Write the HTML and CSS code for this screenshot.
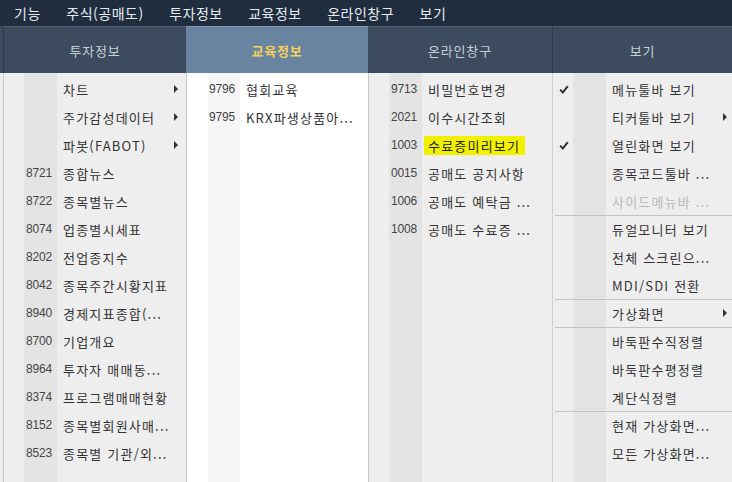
FILE: index.html
```html
<!DOCTYPE html>
<html lang="ko">
<head>
<meta charset="utf-8">
<title>메뉴</title>
<link rel="stylesheet" href="styles.css">
</head>
<body>
<nav class="menubar">
  <span class="mb-item">기능</span>
  <span class="mb-item">주식(공매도)</span>
  <span class="mb-item">투자정보</span>
  <span class="mb-item">교육정보</span>
  <span class="mb-item">온라인창구</span>
  <span class="mb-item">보기</span>
</nav>
<div class="panel">
  <section class="col col-1">
    <div class="head">투자정보</div>
    <ul class="list">
      <li class="item"><span class="chk"></span><span class="code"></span><span class="label">차트</span><span class="sub"></span></li>
      <li class="item"><span class="chk"></span><span class="code"></span><span class="label">주가감성데이터</span><span class="sub"></span></li>
      <li class="item"><span class="chk"></span><span class="code"></span><span class="label">파봇(FABOT)</span><span class="sub"></span></li>
      <li class="item"><span class="chk"></span><span class="code">8721</span><span class="label">종합뉴스</span></li>
      <li class="item"><span class="chk"></span><span class="code">8722</span><span class="label">종목별뉴스</span></li>
      <li class="item"><span class="chk"></span><span class="code">8074</span><span class="label">업종별시세표</span></li>
      <li class="item"><span class="chk"></span><span class="code">8202</span><span class="label">전업종지수</span></li>
      <li class="item"><span class="chk"></span><span class="code">8042</span><span class="label">종목주간시황지표</span></li>
      <li class="item"><span class="chk"></span><span class="code">8940</span><span class="label">경제지표종합(...</span></li>
      <li class="item"><span class="chk"></span><span class="code">8700</span><span class="label">기업개요</span></li>
      <li class="item"><span class="chk"></span><span class="code">8964</span><span class="label">투자자 매매동...</span></li>
      <li class="item"><span class="chk"></span><span class="code">8374</span><span class="label">프로그램매매현황</span></li>
      <li class="item"><span class="chk"></span><span class="code">8152</span><span class="label">종목별회원사매...</span></li>
      <li class="item"><span class="chk"></span><span class="code">8523</span><span class="label">종목별 기관/외...</span></li>
    </ul>
  </section>
  <section class="col col-2">
    <div class="head head-active">교육정보</div>
    <ul class="list list-white">
      <li class="item"><span class="chk"></span><span class="code">9796</span><span class="label">협회교육</span></li>
      <li class="item"><span class="chk"></span><span class="code">9795</span><span class="label">KRX파생상품아...</span></li>
    </ul>
  </section>
  <section class="col col-3">
    <div class="head">온라인창구</div>
    <ul class="list">
      <li class="item"><span class="chk"></span><span class="code">9713</span><span class="label">비밀번호변경</span></li>
      <li class="item"><span class="chk"></span><span class="code">2021</span><span class="label">이수시간조회</span></li>
      <li class="item"><span class="chk"></span><span class="code">1003</span><span class="label"><mark class="hl">수료증미리보기</mark></span></li>
      <li class="item"><span class="chk"></span><span class="code">0015</span><span class="label">공매도 공지사항</span></li>
      <li class="item"><span class="chk"></span><span class="code">1006</span><span class="label">공매도 예탁금 ...</span></li>
      <li class="item"><span class="chk"></span><span class="code">1008</span><span class="label">공매도 수료증 ...</span></li>
    </ul>
  </section>
  <section class="col col-4">
    <div class="head head-split">보기</div>
    <ul class="list">
      <li class="item"><span class="chk"><svg class="tick" width="10" height="9" viewBox="0 0 10 9"><path d="M1.2 4.6 L3.8 7.4 L8.8 1.2" fill="none" stroke="#333" stroke-width="2"/></svg></span><span class="code"></span><span class="label">메뉴툴바 보기</span></li>
      <li class="item"><span class="chk"></span><span class="code"></span><span class="label">티커툴바 보기</span><span class="sub sub-edge"></span></li>
      <li class="item"><span class="chk"><svg class="tick" width="10" height="9" viewBox="0 0 10 9"><path d="M1.2 4.6 L3.8 7.4 L8.8 1.2" fill="none" stroke="#333" stroke-width="2"/></svg></span><span class="code"></span><span class="label">열린화면 보기</span></li>
      <li class="item"><span class="chk"></span><span class="code"></span><span class="label">종목코드툴바 ...</span></li>
      <li class="item disabled"><span class="chk"></span><span class="code"></span><span class="label">사이드메뉴바 ...</span></li>
      <li class="item sep"><span class="chk"></span><span class="code"></span><span class="label">듀얼모니터 보기</span></li>
      <li class="item"><span class="chk"></span><span class="code"></span><span class="label">전체 스크린으...</span></li>
      <li class="item"><span class="chk"></span><span class="code"></span><span class="label">MDI/SDI 전환</span></li>
      <li class="item sep"><span class="chk"></span><span class="code"></span><span class="label">가상화면</span><span class="sub sub-edge"></span></li>
      <li class="item sep"><span class="chk"></span><span class="code"></span><span class="label">바둑판수직정렬</span></li>
      <li class="item"><span class="chk"></span><span class="code"></span><span class="label">바둑판수평정렬</span></li>
      <li class="item"><span class="chk"></span><span class="code"></span><span class="label">계단식정렬</span></li>
      <li class="item sep"><span class="chk"></span><span class="code"></span><span class="label">현재 가상화면...</span></li>
      <li class="item"><span class="chk"></span><span class="code"></span><span class="label">모든 가상화면...</span></li>
    </ul>
  </section>
</div>
</body>
</html>
```
FILE: styles.css
```css
* { box-sizing: border-box; }
html, body {
  margin: 0;
  padding: 0;
  width: 732px;
  height: 482px;
  overflow: hidden;
  background: #eeeeee;
  font-family: "Noto Sans CJK KR", "Noto Sans", sans-serif;
  font-size: 13px;
  color: #333333;
}
.menubar {
  height: 26px;
  background: #1f2d3e;
  display: flex;
  align-items: center;
  gap: 25.5px;
  padding-left: 14px;
  color: #e6ebf0;
  font-size: 14px;
  letter-spacing: 0.5px;
}
.mb-item { line-height: 26px; }

.panel {
  display: grid;
  grid-template-columns: 186px 182px 184px 1fr;
  height: 456px;
}
.col {
  display: flex;
  flex-direction: column;
  min-width: 0;
}
.col-1 {
  padding-left: 3px;
  background: linear-gradient(#3c4c5e 0, #3c4c5e 47px, #eeeeee 47px);
}
.head {
  height: 47px;
  flex: none;
  border-top: 1px solid #4d5e70;
  background: #3c4c5e;
  color: #c6ced7;
  display: flex;
  align-items: center;
  justify-content: center;
  font-size: 13px;
  letter-spacing: 0.8px;
}
.col-1 .head { border-left: 1px solid #2f3c4b; }
.head-active {
  background: #6984a0;
  border-top-color: #7d97b1;
  color: #f3cf5e;
  font-weight: bold;
}
.head-split { border-left: 1px solid #2f3c4b; }

.list {
  list-style: none;
  margin: 0;
  padding: 2px 0 0 0;
  flex: 1;
  border-left: 1px solid #c9c9c9;
  background: linear-gradient(to right, transparent 20px, #e4e4e4 20px, #e4e4e4 53px, transparent 53px), #eeeeee;
}
.list-white {
  background: linear-gradient(to right, transparent 21px, #f6f6f6 21px, #f6f6f6 53px, transparent 53px), #ffffff;
}
.col-4 .list { border-left-color: #d0d0d0; }

.item {
  position: relative;
  height: 28px;
  display: flex;
  align-items: center;
  white-space: nowrap;
}
.chk {
  width: 20px;
  flex: none;
  display: flex;
  align-items: center;
  justify-content: center;
  padding-left: 2px;
}
.tick { display: block; }
.code {
  width: 33px;
  flex: none;
  text-align: right;
  padding-right: 5px;
  font-family: "Liberation Sans", "Noto Sans", sans-serif;
  font-size: 12px;
  color: #444444;
  letter-spacing: -0.2px;
}
.label {
  flex: 1;
  padding-left: 6px;
  overflow: hidden;
  letter-spacing: 1.2px;
}
.sub {
  width: 0;
  height: 0;
  flex: none;
  margin-right: 8px;
  border-top: 4px solid transparent;
  border-bottom: 4px solid transparent;
  border-left: 4px solid #333333;
}
.sub-edge { margin-right: 5px; }
.disabled .label { color: #b9b9b9; }
.sep::before {
  content: "";
  position: absolute;
  left: 2px;
  right: 0;
  top: 0;
  border-top: 1px solid #c4c4c4;
}
.hl {
  background: #f2f200;
  color: #222222;
  padding: 2px 5px 3px 4px;
  margin-left: -4px;
}
```
